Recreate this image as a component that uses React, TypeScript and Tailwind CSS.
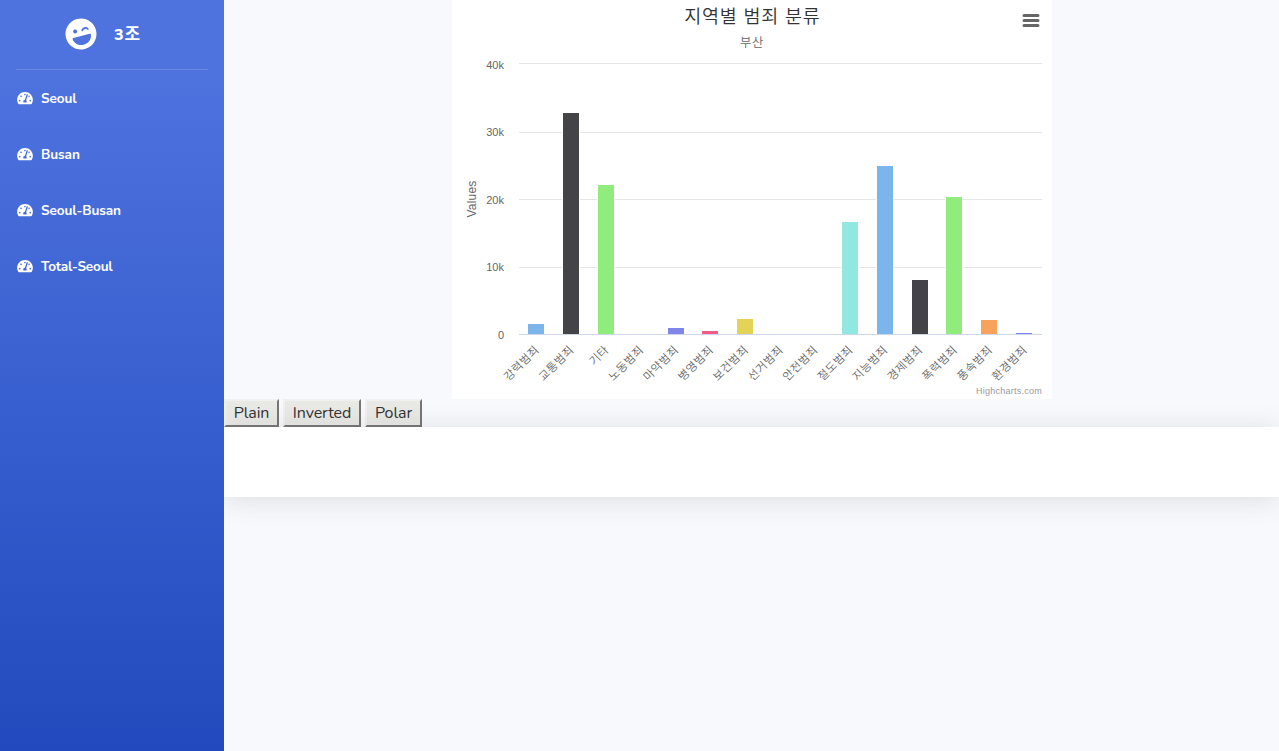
import { FaLaughWink, FaTachometerAlt } from "react-icons/fa";

const NAV = [
  { label: "Seoul", spacing: "tracking-[-0.1px]" },
  { label: "Busan", spacing: "tracking-[-0.1px]" },
  { label: "Seoul-Busan", spacing: "tracking-[-0.1px]" },
  { label: "Total-Seoul", spacing: "tracking-[-0.2px]" },
];

const BUTTONS = [
  { label: "Plain", width: "w-[55px]" },
  { label: "Inverted", width: "w-[78px]" },
  { label: "Polar", width: "w-[57px]" },
];

const GRID = [
  { label: "40k", y: 63, text: 69 },
  { label: "30k", y: 132, text: 136 },
  { label: "20k", y: 199, text: 204 },
  { label: "10k", y: 267, text: 271 },
  { label: "0", y: 334, text: 339 },
];

const BARS = [
  { label: "강력범죄", x: 76, top: 324, color: "#7cb5ec" },
  { label: "교통범죄", x: 111, top: 113, color: "#434348" },
  { label: "기타", x: 146, top: 185, color: "#90ed7d" },
  { label: "노동범죄", x: 181, top: 334, color: "#f7a35c" },
  { label: "마약범죄", x: 216, top: 328, color: "#8085e9" },
  { label: "병영범죄", x: 250, top: 331, color: "#f15c80" },
  { label: "보건범죄", x: 285, top: 319, color: "#e4d354" },
  { label: "선거범죄", x: 320, top: 334, color: "#2b908f" },
  { label: "안전범죄", x: 355, top: 334, color: "#f45b5b" },
  { label: "절도범죄", x: 390, top: 222, color: "#91e8e1" },
  { label: "지능범죄", x: 425, top: 166, color: "#7cb5ec" },
  { label: "경제범죄", x: 460, top: 280, color: "#434348" },
  { label: "폭력범죄", x: 494, top: 197, color: "#90ed7d" },
  { label: "풍속범죄", x: 529, top: 320, color: "#f7a35c" },
  { label: "환경범죄", x: 564, top: 333, color: "#8085e9" },
];

function Chart() {
  return (
    <svg
      width="600"
      height="399"
      viewBox="0 0 600 399"
      className="mx-auto block shrink-0 bg-white font-['Liberation_Sans','Noto_Sans_CJK_KR',sans-serif]"
    >
      <g className="font-[350]">
        <text x="300.4" y="23" textAnchor="middle" fontSize="18.5" letterSpacing="0.75" fill="#333333">
          지역별 범죄 분류
        </text>
        <text x="300" y="47" textAnchor="middle" fontSize="12.3" letterSpacing="0.7" fill="#666666">
          부산
        </text>
      </g>
      {GRID.slice(0, 4).map((g) => (
        <rect key={g.label} x="67" y={g.y} width="523" height="1" fill="#e6e6e6" />
      ))}
      {BARS.filter((b) => b.top < 334).map((b) => (
        <g key={b.label}>
          <rect x={b.x - 1} y={b.top - 1} width="18" height={335 - b.top} fill="#ffffff" />
          <rect x={b.x} y={b.top} width="16" height={334 - b.top} fill={b.color} />
        </g>
      ))}
      <rect x="67" y="334" width="523" height="1" fill="#ccd6eb" />
      {GRID.map((g) => (
        <text key={g.label} x="52" y={g.text} textAnchor="end" fontSize="11" fill="#666666">
          {g.label}
        </text>
      ))}
      <text
        textAnchor="middle"
        fontSize="12"
        letterSpacing="0.2"
        fill="#666666"
        transform="translate(24 199) rotate(-90)"
      >
        Values
      </text>
      {BARS.map((b, i) => (
        <text
          key={b.label}
          textAnchor="end"
          fontSize="11.4"
          letterSpacing="0.5"
          fill="#666666"
          className="font-[350]"
          transform={`translate(${87.7 + i * 34.867} 350.5) rotate(-45)`}
        >
          {b.label}
        </text>
      ))}
      <g stroke="#666666" strokeWidth="3" strokeLinecap="round">
        <path d="M572 15.5H586M572 20.5H586M572 25.5H586" />
      </g>
      <text x="590" y="394" textAnchor="end" fontSize="9" letterSpacing="0.25" fill="#999999">
        Highcharts.com
      </text>
    </svg>
  );
}

export default function App() {
  return (
    <div className="flex h-[751px] w-full overflow-hidden bg-[#f8f9fc] font-['Nunito','Open_Sans','Noto_Sans_CJK_KR',sans-serif]">
      <nav className="flex w-56 shrink-0 flex-col bg-linear-[180deg,#4e73df_10%,#224abe_100%] text-white">
        <div className="flex h-[69px] items-center justify-center pb-[2px]">
          <FaLaughWink className="size-8 -rotate-15" />
          <span className="mt-[2px] mr-[18px] ml-[17px] text-[16px] font-extrabold tracking-[0.8px]">
            3<span className="text-[17px] font-bold">조</span>
          </span>
        </div>
        <hr className="mx-4 border-t border-white/15" />
        {NAV.map((n) => (
          <a key={n.label} className="flex h-14 items-center px-4 pt-[3px]">
            <FaTachometerAlt className="mr-2 mb-[3px] ml-px h-[14px] w-4" />
            <span className={`text-[13.6px] font-bold ${n.spacing}`}>{n.label}</span>
          </a>
        ))}
      </nav>
      <main className="flex min-w-0 flex-1 flex-col overflow-hidden">
        <Chart />
        <div className="flex h-7 gap-1">
          {BUTTONS.map((b) => (
            <button
              key={b.label}
              className={`${b.width} flex h-7 items-center justify-center border-2 border-t-[#f0f0f0] border-r-[#767676] border-b-[#767676] border-l-[#f0f0f0] bg-[#e9e9e6] text-[16px] tracking-[-0.1px] text-[#333333]`}
            >
              {b.label}
            </button>
          ))}
        </div>
        <footer className="relative h-[70px] bg-white shadow-[0_2.4px_28px_0_rgba(58,59,69,0.15)]" />
      </main>
    </div>
  );
}
